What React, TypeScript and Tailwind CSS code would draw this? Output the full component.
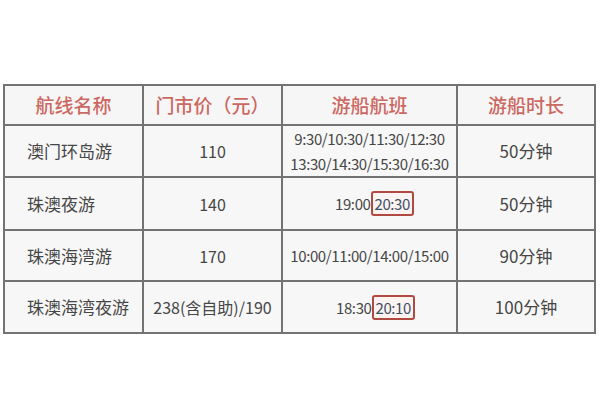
import React from "react";

const font = { fontFamily: '"Noto Sans CJK SC", "Noto Sans", sans-serif' };

function Box({ children }: { children: React.ReactNode }) {
  return (
    <span className="inline-flex items-center h-[25px] px-[2px] border-2 border-[#b04a40] rounded-[3px] text-[#3d4f63] bg-[#fbf3f2]">
      {children}
    </span>
  );
}

export default function App() {
  const head = "bg-[#f7f6f6] flex items-center justify-center text-[19px] text-[#cc6862] font-medium";
  const name = "bg-[#f7f7f7] flex items-center pl-[22px] text-[17px] text-[#464646]";
  const cell = "bg-[#f7f7f7] flex items-center justify-center text-[16px] text-[#464646]";
  const time = "bg-[#f7f7f7] flex flex-col items-center justify-center text-[15px] tracking-[-0.4px] text-[#464646] leading-[25px]";
  const dur = "bg-[#f7f7f7] flex items-center justify-center text-[17px] text-[#464646]";
  return (
    <div className="w-[600px] h-[400px] bg-white pt-[84px] pl-[3px]" style={font}>
      <div className="w-[593px] grid grid-cols-[137px_137px_173px_136px] grid-rows-[38px_50px_51px_49px_50px] gap-[2px] p-[2px] bg-[#737373]">
        <div className={head}>航线名称</div>
        <div className={head}>门市价（元）</div>
        <div className={head}>游船航班</div>
        <div className={head}>游船时长</div>

        <div className={name}>澳门环岛游</div>
        <div className={cell}>110</div>
        <div className={time}>
          <span>9:30/10:30/11:30/12:30</span>
          <span>13:30/14:30/15:30/16:30</span>
        </div>
        <div className={dur}>50分钟</div>

        <div className={name}>珠澳夜游</div>
        <div className={cell}>140</div>
        <div className={time}>
          <span className="flex items-center pl-[10px]">
            19:00<Box>20:30</Box>
          </span>
        </div>
        <div className={dur}>50分钟</div>

        <div className={name}>珠澳海湾游</div>
        <div className={cell}>170</div>
        <div className={time}>
          <span>10:00/11:00/14:00/15:00</span>
        </div>
        <div className={dur}>90分钟</div>

        <div className={name}>珠澳海湾夜游</div>
        <div className={cell}>238(含自助)/190</div>
        <div className={time}>
          <span className="flex items-center pl-[12px]">
            18:30<Box>20:10</Box>
          </span>
        </div>
        <div className={dur}>100分钟</div>
      </div>
    </div>
  );
}
